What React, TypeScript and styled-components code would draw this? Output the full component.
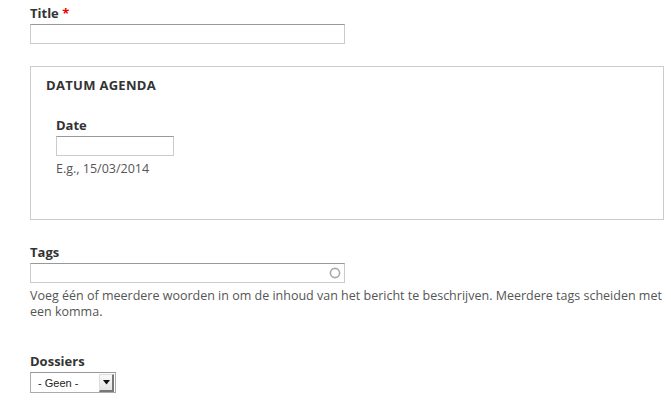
import styled, { createGlobalStyle } from "styled-components";

const GlobalStyle = createGlobalStyle`
  html, body {
    margin: 0;
    padding: 0;
    background: #fff;
  }
  body {
    font-family: "Open Sans", "Liberation Sans", sans-serif;
    color: #333;
  }
`;

const Page = styled.div`
  width: 634px;
  padding: 5px 0 0 30px;
`;

const FormItem = styled.div<{ gap?: number }>`
  margin-top: ${(p) => p.gap ?? 0}px;
`;

const Label = styled.label`
  display: block;
  font-size: 13px;
  font-weight: 700;
  line-height: 16px;
  height: 19px;
  color: #333;
`;

const Required = styled.span`
  color: #e00;
`;

const TextInput = styled.div<{ w: number }>`
  box-sizing: border-box;
  width: ${(p) => p.w}px;
  height: 20px;
  border: 1px solid #ccc;
  border-top-color: #999;
  background: #fff;
  display: flex;
  align-items: center;
  justify-content: flex-end;
  padding-right: 3px;
`;

const Fieldset = styled.fieldset`
  box-sizing: border-box;
  width: 634px;
  height: 154px;
  margin: 22px 0 0 0;
  padding: 10px 15px 0 15px;
  border: 1px solid #ccc;
  min-width: 0;
`;

const Legend = styled.div`
  font-size: 13px;
  font-weight: 700;
  line-height: 16px;
  letter-spacing: 0.3px;
  text-transform: uppercase;
  color: #333;
`;

const FieldsetBody = styled.div`
  padding: 24px 0 0 10px;
`;

const Description = styled.div`
  font-size: 12.5px;
  line-height: 16px;
  color: #555;
  margin-top: 5px;
`;

const Select = styled.div`
  box-sizing: border-box;
  width: 86px;
  height: 21px;
  border: 1px solid #aaa;
  border-top-color: #999;
  background: #fff;
  display: flex;
  align-items: center;
  justify-content: space-between;
  padding: 0 1px 0 7px;
  font-family: "Liberation Sans", Arial, sans-serif;
  font-size: 11px;
  color: #222;
`;

const SelectButton = styled.div`
  box-sizing: border-box;
  width: 15px;
  height: 18px;
  display: flex;
  align-items: center;
  justify-content: center;
  background: linear-gradient(#fafafa, #e4e4e4);
  border-right: 2px solid #777;
  border-bottom: 2px solid #777;
  border-left: 1px solid #ddd;
  border-top: 1px solid #ddd;
`;

const Throbber = () => (
  <svg width="12" height="12" viewBox="0 0 12 12">
    <circle cx="6" cy="6" r="4.6" fill="none" stroke="#a8a8a8" strokeWidth="1.6" />
  </svg>
);

const Arrow = () => (
  <svg width="7" height="5" viewBox="0 0 7 5">
    <path d="M0 0h7L3.5 4.5z" fill="#111" />
  </svg>
);

export default function App() {
  return (
    <>
      <GlobalStyle />
      <Page>
        <FormItem>
          <Label>
            Title <Required>*</Required>
          </Label>
          <TextInput w={315} />
        </FormItem>

        <Fieldset>
          <Legend>Datum agenda</Legend>
          <FieldsetBody>
            <Label>Date</Label>
            <TextInput w={118} />
            <Description>E.g., 15/03/2014</Description>
          </FieldsetBody>
        </Fieldset>

        <FormItem gap={24}>
          <Label>Tags</Label>
          <TextInput w={315}>
            <Throbber />
          </TextInput>
          <Description>
            Voeg één of meerdere woorden in om de inhoud van het bericht te beschrijven. Meerdere
            tags scheiden met een komma.
          </Description>
        </FormItem>

        <FormItem gap={33}>
          <Label>Dossiers</Label>
          <Select>
            - Geen -
            <SelectButton>
              <Arrow />
            </SelectButton>
          </Select>
        </FormItem>
      </Page>
    </>
  );
}
